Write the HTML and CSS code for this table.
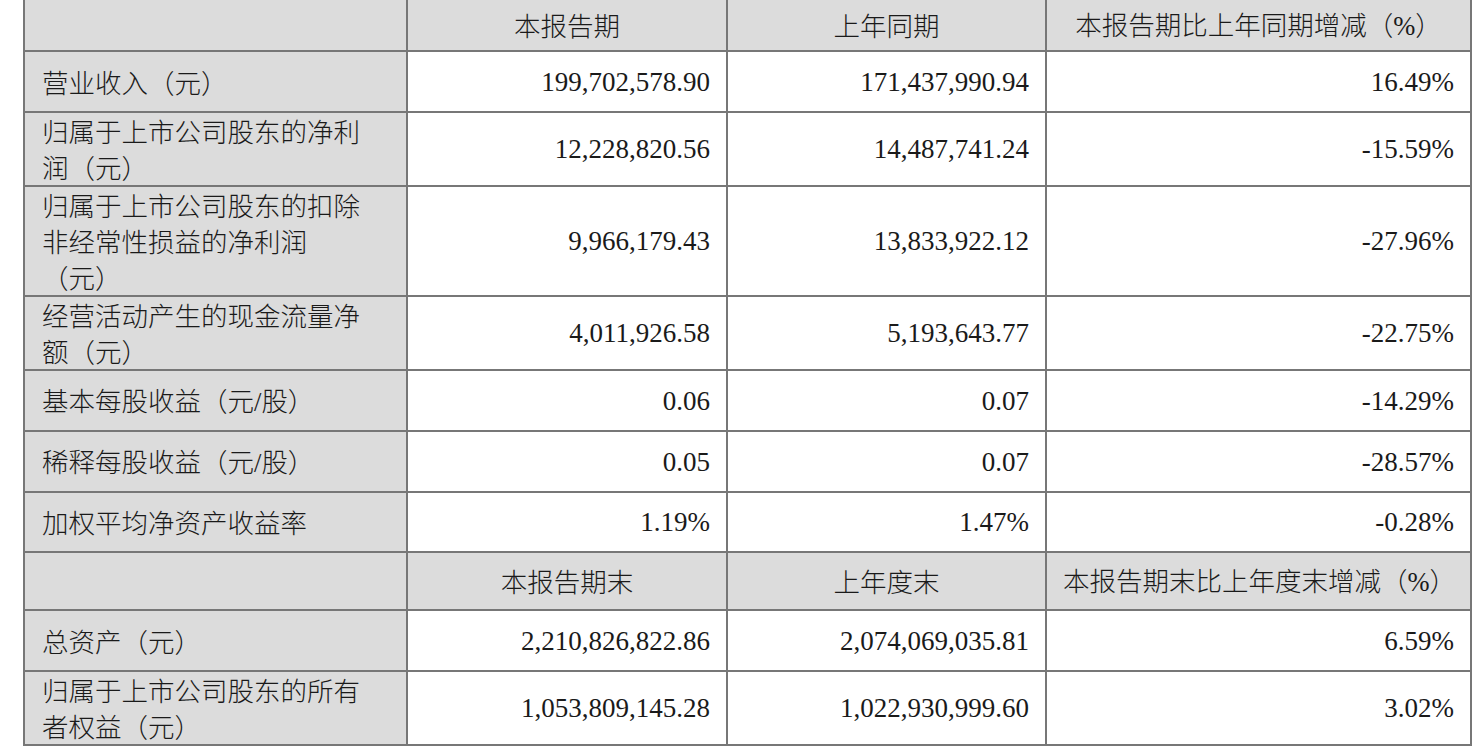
FILE: index.html
```html
<!DOCTYPE html>
<html lang="zh-CN">
<head>
<meta charset="utf-8">
<title>主要会计数据</title>
<link rel="stylesheet" href="styles.css">
</head>
<body>
<table class="fin">
  <colgroup>
    <col class="c-label"><col class="c-num"><col class="c-num2"><col class="c-pct">
  </colgroup>
  <tr class="head h1">
    <td class="lab"></td><td>本报告期</td><td>上年同期</td><td>本报告期比上年同期增减（<span class="lat">%</span>）</td>
  </tr>
  <tr class="r61">
    <td class="lab">营业收入（元）</td><td class="num">199,702,578.90</td><td class="num">171,437,990.94</td><td class="num">16.49%</td>
  </tr>
  <tr class="r72">
    <td class="lab">归属于上市公司股东的净利润（元）</td><td class="num">12,228,820.56</td><td class="num">14,487,741.24</td><td class="num">-15.59%</td>
  </tr>
  <tr class="r109">
    <td class="lab">归属于上市公司股东的扣除非经常性损益的净利润<br>（元）</td><td class="num">9,966,179.43</td><td class="num">13,833,922.12</td><td class="num">-27.96%</td>
  </tr>
  <tr class="r74">
    <td class="lab">经营活动产生的现金流量净额（元）</td><td class="num">4,011,926.58</td><td class="num">5,193,643.77</td><td class="num">-22.75%</td>
  </tr>
  <tr class="r61">
    <td class="lab">基本每股收益（元<span class="lat">/</span>股）</td><td class="num">0.06</td><td class="num">0.07</td><td class="num">-14.29%</td>
  </tr>
  <tr class="r61">
    <td class="lab">稀释每股收益（元<span class="lat">/</span>股）</td><td class="num">0.05</td><td class="num">0.07</td><td class="num">-28.57%</td>
  </tr>
  <tr class="r60">
    <td class="lab">加权平均净资产收益率</td><td class="num">1.19%</td><td class="num">1.47%</td><td class="num">-0.28%</td>
  </tr>
  <tr class="head h2">
    <td class="lab"></td><td>本报告期末</td><td>上年度末</td><td>本报告期末比上年度末增减（<span class="lat">%</span>）</td>
  </tr>
  <tr class="r61">
    <td class="lab">总资产（元）</td><td class="num">2,210,826,822.86</td><td class="num">2,074,069,035.81</td><td class="num">6.59%</td>
  </tr>
  <tr class="r72">
    <td class="lab">归属于上市公司股东的所有者权益（元）</td><td class="num">1,053,809,145.28</td><td class="num">1,022,930,999.60</td><td class="num">3.02%</td>
  </tr>
</table>
</body>
</html>
```

FILE: styles.css
```css
html, body {
  margin: 0;
  padding: 0;
  background: #ffffff;
}

.fin {
  margin: -2px 0 0 23px;
  border-collapse: collapse;
  table-layout: fixed;
  width: 1447px;
  font-family: "Liberation Serif", "Noto Sans CJK SC", serif;
  color: #1a1a1a;
}

.c-label { width: 383px; }
.c-num { width: 320px; }
.c-num2 { width: 319px; }
.c-pct { width: 425px; }

.fin td {
  border: 2px solid #777777;
  padding: 0 16px;
  vertical-align: middle;
  font-size: 27px;
  line-height: 36px;
  overflow: hidden;
}

.fin td.lab {
  background: #dcdcdc;
  font-family: "Noto Sans CJK SC", sans-serif;
  font-weight: 300;
  font-size: 26.5px;
  line-height: 36px;
  text-align: left;
  padding-left: 17px;
  padding-right: 34px;
}

.fin td.num {
  text-align: right;
  padding-right: 16px;
}

.head td {
  background: #dcdcdc;
  text-align: center;
  font-family: "Noto Sans CJK SC", sans-serif;
  font-weight: 300;
  font-size: 26.5px;
  white-space: nowrap;
}

.lat {
  font-family: "Liberation Serif", serif;
  font-weight: 400;
}

.h1 td { height: 50px; }
.h2 td { height: 56px; }
.r60 td { height: 58px; }
.r61 td { height: 59px; }
.r72 td { height: 70px; }
.r74 td { height: 72px; }
.r109 td { height: 107px; }
```
